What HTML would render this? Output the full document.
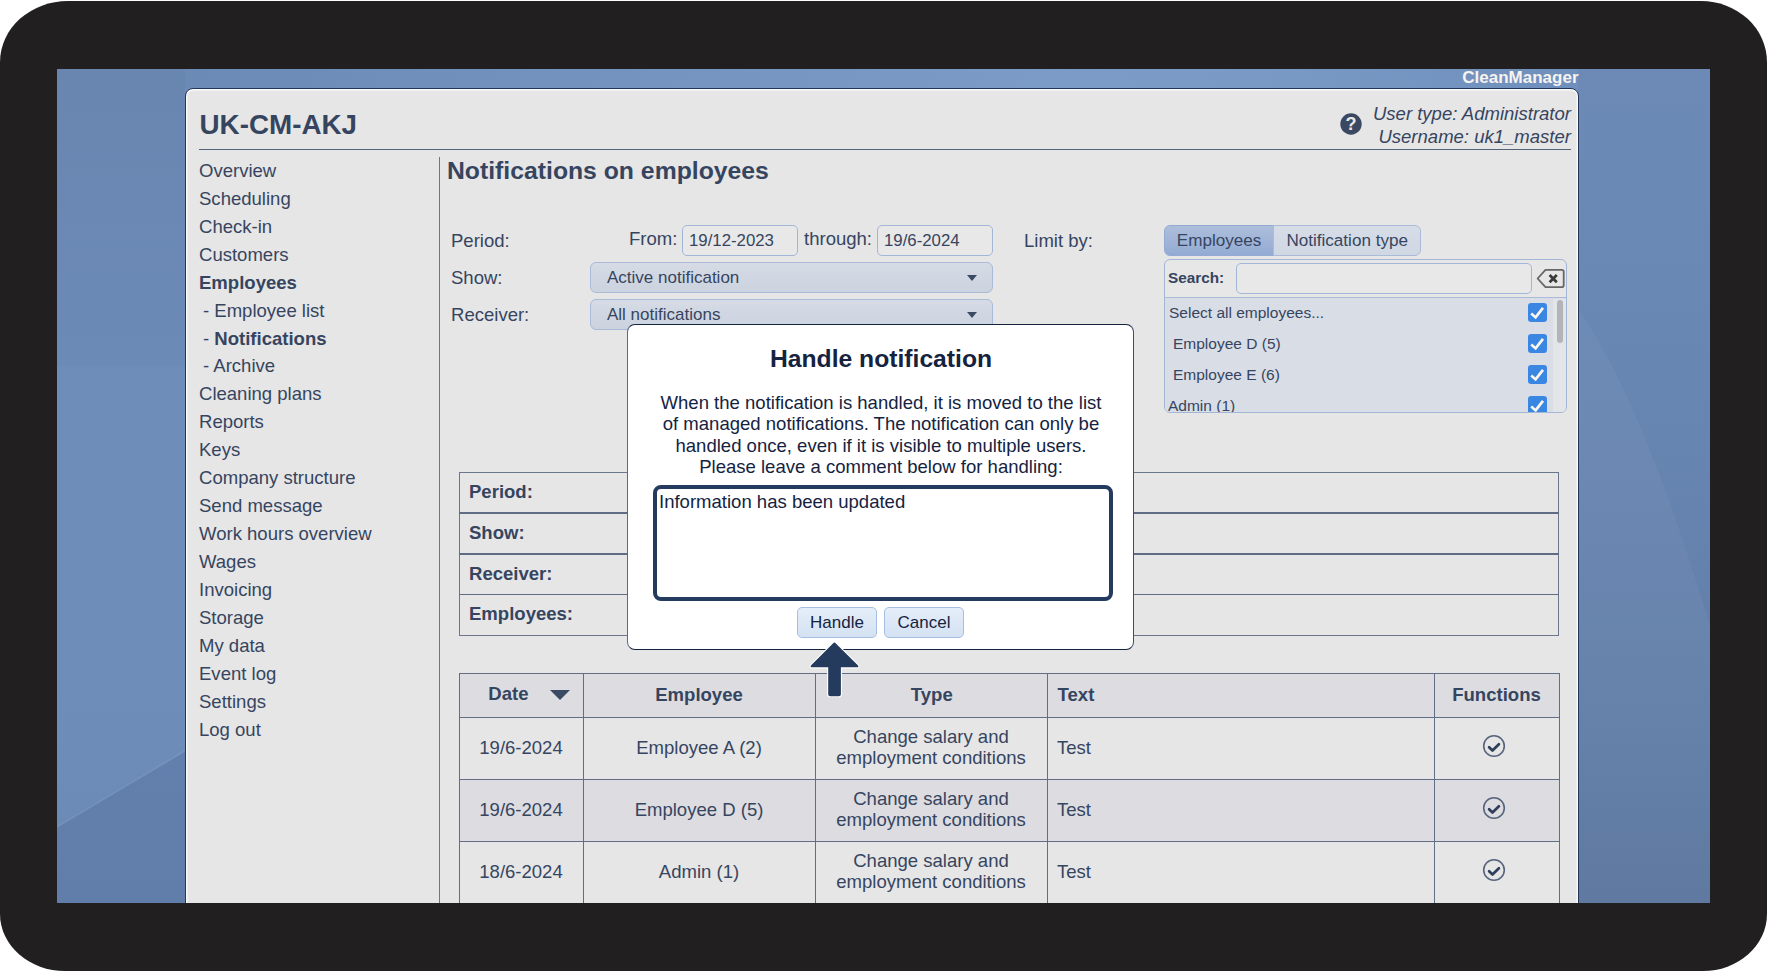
<!DOCTYPE html>
<html><head><meta charset="utf-8">
<style>
*{box-sizing:border-box;margin:0;padding:0}
html,body{width:1767px;height:971px;overflow:hidden;background:#fff;font-family:"Liberation Sans",sans-serif;color:#36455f}
#frame{position:absolute;left:0;top:0.9px;width:1767px;height:970.1px;background:#221f20;border-radius:68px 66px 64px 65px / 61px 61px 57px 57px;overflow:hidden}
#screen{position:absolute;left:57px;top:67.7px;width:1653.1px;height:834.3px;overflow:hidden;
 background:linear-gradient(95deg,#6887b3 0%,#6d8cb8 8%,#7595c0 30%,#7d9ec9 58%,#7b9cc7 70%,#6f8fbc 92%,#6686b3 100%)}
#shade{position:absolute;left:0;top:0;width:100%;height:100%;background:linear-gradient(180deg,rgba(20,40,90,0.02) 0%,rgba(255,255,255,0.02) 45%,rgba(20,40,90,0.24) 100%)}
#o{position:absolute;left:-57px;top:-68.6px;width:1767px;height:971px}
#o div,#o span,#o svg{position:absolute}
.t{white-space:nowrap}
#brand{left:1378.5px;width:200px;text-align:right;top:69.1px;color:#f7f3ee;font-weight:bold;font-size:17px;line-height:18px}
#panel{left:184.6px;top:88px;width:1394.6px;height:900px;background:#e6e6e6;border:1.2px solid #22365a;border-radius:8px 8px 0 0;box-shadow:inset 0 0 0 1.4px #fbfbfb}
#title{left:199.5px;top:110px;font-size:27.8px;font-weight:bold;line-height:30px}
#hr{left:199px;top:148.6px;width:1372px;height:1.5px;background:#55637a}
#vr{left:438.6px;top:156.6px;width:1.5px;height:800px;background:#6a768a}
.m{left:199px;font-size:18.55px;line-height:22px;white-space:nowrap}
.m.s{left:203px}
.b{font-weight:bold}
.u{font-style:italic;font-size:18.55px;line-height:22px;text-align:right;left:1271px;width:300px;white-space:nowrap}
.l{font-size:18.55px;line-height:22px;white-space:nowrap}
.inp{background:#e8e8e8;border:1px solid #a2b6d8;border-radius:5px;font-size:16.8px;line-height:29.2px;padding-left:6px;white-space:nowrap}
.sel{background:linear-gradient(#d6dbe5,#cbd3df);border:1px solid #a9bbd8;border-radius:6px;font-size:17px;line-height:30.2px;padding-left:16px;white-space:nowrap}
.car{width:0;height:0;border-left:5.7px solid transparent;border-right:5.7px solid transparent;border-top:6.6px solid #3b4a63;margin-top:0.7px;margin-left:0.6px}
.seg{font-size:17.1px;line-height:29px;text-align:center;white-space:nowrap;border:1px solid #a9bbd8}
.tb{border:1px solid #6a768a}
.th{font-weight:bold;font-size:18.55px;line-height:22px;white-space:nowrap}
.td{font-size:18.55px;line-height:21.3px;text-align:center}
.cell{border-left:1px solid #6a768a;border-top:1px solid #6a768a}
.li{font-size:15.5px;line-height:18px;white-space:nowrap}
.cb{width:18px;height:18px;background:#1a73e8;border-radius:3px}
</style></head><body>
<div id="frame">
<div id="screen">
<div id="shade"></div>
<div style="position:absolute;left:0;top:0;width:128px;height:835px;background:linear-gradient(180deg,#6986b1 0%,#6c8ab6 35.4%,#6e8db9 35.8%,#6e8db9 75%,#6b89b5 100%)"></div>
<div style="position:absolute;left:1521px;top:0;width:133px;height:835px;background:linear-gradient(180deg,#6c8ab5 0%,#6988b4 25%,#6583ae 55%,#5f7ca6 80%,#59749d 100%)"></div>
<svg style="position:absolute;left:0;top:0" width="1654" height="835"><polygon points="0,758 128,682 128,835 0,835" fill="rgba(30,50,100,0.13)"/><line x1="0" y1="758" x2="128" y2="682" stroke="rgba(255,255,255,0.10)" stroke-width="1.5"/><path d="M1521,240 Q1585,330 1654,560 L1654,835 L1521,835 Z" fill="rgba(255,255,255,0.04)"/></svg>
<div id="o">
<div id="brand">CleanManager</div>
<div id="panel"></div>
<div class="t" id="title">UK-CM-AKJ</div>
<div id="hr"></div><div id="vr"></div>
<svg style="left:1340px;top:113px" width="22" height="22" viewBox="0 0 22 22"><circle cx="11" cy="11" r="10.7" fill="#3a4961"/><text x="11" y="17.2" text-anchor="middle" font-family="Liberation Sans" font-weight="bold" font-size="18" fill="#e9e9e9">?</text></svg>
<div class="u" style="top:103px">User type: Administrator</div>
<div class="u" style="top:126px">Username: uk1_master</div>
<div class="t b" style="left:447px;top:157px;font-size:24.75px;line-height:28px">Notifications on employees</div>

<div class="m" style="top:160.0px">Overview</div>
<div class="m" style="top:187.9px">Scheduling</div>
<div class="m" style="top:215.9px">Check-in</div>
<div class="m" style="top:243.8px">Customers</div>
<div class="m b" style="top:271.7px">Employees</div>
<div class="m s" style="top:299.6px">- Employee list</div>
<div class="m s" style="top:327.6px">- <b>Notifications</b></div>
<div class="m s" style="top:355.5px">- Archive</div>
<div class="m" style="top:383.4px">Cleaning plans</div>
<div class="m" style="top:411.4px">Reports</div>
<div class="m" style="top:439.3px">Keys</div>
<div class="m" style="top:467.2px">Company structure</div>
<div class="m" style="top:495.2px">Send message</div>
<div class="m" style="top:523.1px">Work hours overview</div>
<div class="m" style="top:551.0px">Wages</div>
<div class="m" style="top:579.0px">Invoicing</div>
<div class="m" style="top:606.9px">Storage</div>
<div class="m" style="top:634.8px">My data</div>
<div class="m" style="top:662.7px">Event log</div>
<div class="m" style="top:690.7px">Settings</div>
<div class="m" style="top:718.6px">Log out</div>

<div class="l" style="left:451px;top:230px">Period:</div>
<div class="l" style="left:451px;top:267px">Show:</div>
<div class="l" style="left:451px;top:304px">Receiver:</div>
<div class="l" style="left:629px;top:228px">From:</div>
<div class="inp" style="left:682px;top:225px;width:116px;height:31px">19/12-2023</div>
<div class="l" style="left:804px;top:228px">through:</div>
<div class="inp" style="left:877px;top:225px;width:116px;height:31px">19/6-2024</div>
<div class="sel" style="left:590px;top:262px;width:403px;height:31px">Active notification</div>
<div class="car" style="left:966px;top:274px"></div>
<div class="sel" style="left:590px;top:299px;width:403px;height:31px">All notifications</div>
<div class="car" style="left:966px;top:311px"></div>
<div class="l" style="left:1024px;top:230px">Limit by:</div>

<div class="seg" style="left:1164px;top:225px;width:110.2px;height:31px;background:linear-gradient(#adbedb,#93abd3);border-radius:6px 0 0 6px;border-color:#93abd3">Employees</div>
<div class="seg" style="left:1273.4px;top:225px;width:147.6px;height:31px;background:linear-gradient(#d7dde7,#cfd7e3);border-radius:0 6px 6px 0">Notification type</div>
<div style="left:1164px;top:259px;width:403px;height:154px;border:1.2px solid #a3b6d6;border-radius:6px;background:#e7e7e8;overflow:hidden">
 <div style="left:0;top:37px;width:403px;height:120px;background:#d9dde6;border-top:1px solid #a9bbd8"></div>
 <div style="left:388.3px;top:39px;width:14px;height:120px;background:#e4e5e8"></div>
 <div style="left:391.6px;top:40.4px;width:6.2px;height:43px;background:#b3b4b7;border-radius:3px"></div>
</div>
<div class="t b" style="left:1168px;top:269px;font-size:15.3px;line-height:18px">Search:</div>
<div class="inp" style="left:1236px;top:263px;width:296px;height:31px"></div>
<svg style="left:1536px;top:267px" width="30" height="22" viewBox="0 0 30 22"><path d="M9.5 2.8 H25.8 Q27.7 2.8 27.7 4.7 V18.2 Q27.7 20.1 25.8 20.1 H9.5 L1.6 11.5 Z" fill="none" stroke="#666" stroke-width="1.8" stroke-linejoin="round"/><path d="M13.6 8 L20.8 15.2 M20.8 8 L13.6 15.2" stroke="#3a3a3a" stroke-width="2.7"/></svg>
<div class="li" style="left:1169px;top:304px">Select all employees...</div>
<div class="li" style="left:1173px;top:335px">Employee D (5)</div>
<div class="li" style="left:1173px;top:366px">Employee E (6)</div>
<div class="li" style="left:1168px;top:397px;height:15px;overflow:hidden">Admin (1)</div>
<svg style="left:1527.95px;top:303.30px" width="19" height="19" viewBox="0 0 19 19"><rect width="19" height="19" rx="3.2" fill="#3a86e3"/><path d="M3.2 10.6 L7.6 14.4 L15 4.9" stroke="#fbf6ec" stroke-width="2.7" fill="none"/></svg><svg style="left:1527.95px;top:334.30px" width="19" height="19" viewBox="0 0 19 19"><rect width="19" height="19" rx="3.2" fill="#3a86e3"/><path d="M3.2 10.6 L7.6 14.4 L15 4.9" stroke="#fbf6ec" stroke-width="2.7" fill="none"/></svg><svg style="left:1527.95px;top:365.30px" width="19" height="19" viewBox="0 0 19 19"><rect width="19" height="19" rx="3.2" fill="#3a86e3"/><path d="M3.2 10.6 L7.6 14.4 L15 4.9" stroke="#fbf6ec" stroke-width="2.7" fill="none"/></svg><div style="left:1527.95px;top:396.3px;width:19px;height:15.7px;overflow:hidden"><svg style="left:0.00px;top:0.00px" width="19" height="19" viewBox="0 0 19 19"><rect width="19" height="19" rx="3.2" fill="#3a86e3"/><path d="M3.2 10.6 L7.6 14.4 L15 4.9" stroke="#fbf6ec" stroke-width="2.7" fill="none"/></svg></div>
<div class="tb" style="left:459px;top:472px;width:1100px;height:164px"></div>
<div style="left:459px;top:512.5px;width:1100px;height:1.4px;background:#5f6c83"></div>
<div style="left:459px;top:553.3px;width:1100px;height:1.4px;background:#5f6c83"></div>
<div style="left:459px;top:594.1px;width:1100px;height:1.4px;background:#5f6c83"></div>
<div class="th" style="left:469px;top:481px">Period:</div>
<div class="th" style="left:469px;top:522px">Show:</div>
<div class="th" style="left:469px;top:563px">Receiver:</div>
<div class="th" style="left:469px;top:603px">Employees:</div>

<div style="left:459px;top:673px;width:1100.3px;height:45px;background:#dcdce1"></div>
<div style="left:459px;top:779px;width:1100.3px;height:62px;background:#dcdce1"></div>
<div style="left:459px;top:673px;width:1100.3px;height:1.2px;background:#616e85"></div>
<div style="left:459px;top:717px;width:1100.3px;height:1.2px;background:#616e85"></div>
<div style="left:459px;top:779px;width:1100.3px;height:1.2px;background:#616e85"></div>
<div style="left:459px;top:841px;width:1100.3px;height:1.2px;background:#616e85"></div>
<div style="left:459px;top:903px;width:1100.3px;height:1.2px;background:#616e85"></div>
<div style="left:458.6px;top:673px;width:1.2px;height:240px;background:#616e85"></div>
<div style="left:582.6px;top:673px;width:1.2px;height:240px;background:#616e85"></div>
<div style="left:814.6px;top:673px;width:1.2px;height:240px;background:#616e85"></div>
<div style="left:1046.6px;top:673px;width:1.2px;height:240px;background:#616e85"></div>
<div style="left:1433.6px;top:673px;width:1.2px;height:240px;background:#616e85"></div>
<div style="left:1558.6px;top:673px;width:1.2px;height:240px;background:#616e85"></div>
<div class="th" style="left:488.3px;top:682.7px">Date</div>
<div style="left:550px;top:690px;width:0;height:0;border-left:10px solid transparent;border-right:10px solid transparent;border-top:10px solid #3b4a63"></div>
<div class="th" style="left:583px;width:232px;top:684.0px;text-align:center">Employee</div>
<div class="th" style="left:815.8px;width:232px;top:684.2px;text-align:center">Type</div>
<div class="th" style="left:1057.6px;top:684.2px">Text</div>
<div class="th" style="left:1434px;width:125px;top:684.0px;text-align:center">Functions</div>
<div class="td" style="left:459px;width:124px;top:737.0px;text-align:center">19/6-2024</div>
<div class="td" style="left:583px;width:232px;top:737.0px;text-align:center">Employee A (2)</div>
<div class="td" style="left:815px;width:232px;top:726.0px;text-align:center">Change salary and<br>employment conditions</div>
<div class="td" style="left:1057px;top:737px">Test</div>
<svg style="left:1482px;top:734px" width="24" height="24" viewBox="0 0 24 24"><circle cx="12" cy="12" r="10.3" fill="none" stroke="#56647c" stroke-width="1.6"/><path d="M7.1 13.2 L10.5 16.5 L16.9 10.3" stroke="#2f3f5a" stroke-width="2.7" fill="none" stroke-linecap="round" stroke-linejoin="round"/></svg>
<div class="td" style="left:459px;width:124px;top:799.0px;text-align:center">19/6-2024</div>
<div class="td" style="left:583px;width:232px;top:799.0px;text-align:center">Employee D (5)</div>
<div class="td" style="left:815px;width:232px;top:788.0px;text-align:center">Change salary and<br>employment conditions</div>
<div class="td" style="left:1057px;top:799px">Test</div>
<svg style="left:1482px;top:796px" width="24" height="24" viewBox="0 0 24 24"><circle cx="12" cy="12" r="10.3" fill="none" stroke="#56647c" stroke-width="1.6"/><path d="M7.1 13.2 L10.5 16.5 L16.9 10.3" stroke="#2f3f5a" stroke-width="2.7" fill="none" stroke-linecap="round" stroke-linejoin="round"/></svg>
<div class="td" style="left:459px;width:124px;top:861.0px;text-align:center">18/6-2024</div>
<div class="td" style="left:583px;width:232px;top:861.0px;text-align:center">Admin (1)</div>
<div class="td" style="left:815px;width:232px;top:850.0px;text-align:center">Change salary and<br>employment conditions</div>
<div class="td" style="left:1057px;top:861px">Test</div>
<svg style="left:1482px;top:858px" width="24" height="24" viewBox="0 0 24 24"><circle cx="12" cy="12" r="10.3" fill="none" stroke="#56647c" stroke-width="1.6"/><path d="M7.1 13.2 L10.5 16.5 L16.9 10.3" stroke="#2f3f5a" stroke-width="2.7" fill="none" stroke-linecap="round" stroke-linejoin="round"/></svg>

<div style="left:627.4px;top:324.1px;width:506.8px;height:325.8px;background:#fff;border-style:solid;border-width:1.8px 1.1px 1.8px 1.4px;border-color:#14233f #3d4e6b #14233f #5b6981;border-radius:8px"></div>
<div class="t b" style="left:628px;width:506px;text-align:center;top:344px;font-size:24.7px;line-height:30px;color:#15233f">Handle notification</div>
<div style="left:628px;width:506px;text-align:center;top:392px;font-size:18.55px;line-height:21.3px;color:#15233f">When the notification is handled, it is moved to the list<br>of managed notifications. The notification can only be<br>handled once, even if it is visible to multiple users.<br>Please leave a comment below for handling:</div>
<div style="left:652.8px;top:485.2px;width:460.6px;height:115.6px;border:4.7px solid #243b5f;border-radius:8px;background:#fff"></div>
<div class="t" style="left:659px;top:491px;font-size:18.55px;line-height:22px;color:#15233f">Information has been updated</div>
<div class="t" style="left:797px;top:607px;width:80px;height:30.8px;background:linear-gradient(#e5eef9,#d4e2f3);border:1.2px solid #a5bfe3;border-radius:5px;text-align:center;font-size:17px;line-height:29.6px;color:#15233f">Handle</div>
<div class="t" style="left:884px;top:607px;width:80px;height:30.8px;background:linear-gradient(#e5eef9,#d4e2f3);border:1.2px solid #a5bfe3;border-radius:5px;text-align:center;font-size:17px;line-height:29.6px;color:#15233f">Cancel</div>
<svg style="left:800px;top:636px" width="70" height="66" viewBox="0 0 70 66"><path d="M33.7 6.8 Q34.4 6.1 35.1 6.8 L57.6 29.0 Q59.6 31.3 56.8 31.3 L40.9 31.3 L40.9 58.2 Q40.9 60.2 38.9 60.2 L30.2 60.2 Q28.2 60.2 28.2 58.2 L28.2 31.3 L12.2 31.3 Q9.4 31.3 11.4 29.0 Z" fill="#253b5e" stroke="#fff" stroke-width="2.2" stroke-linejoin="round" paint-order="stroke"/></svg>

</div>
</div>
</div>
</body></html>
